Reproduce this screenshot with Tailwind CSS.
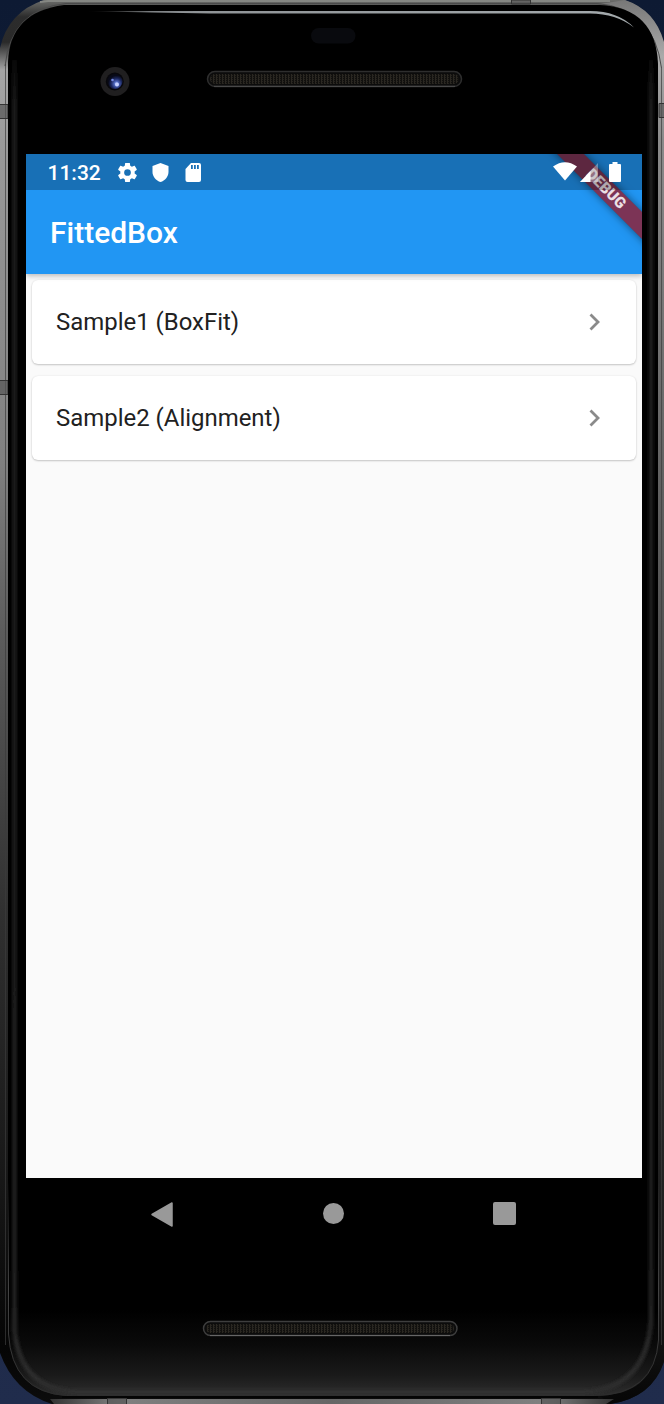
<!DOCTYPE html>
<html lang="en"><head><meta charset="utf-8"><title>FittedBox</title>
<script src="https://cdn.jsdelivr.net/npm/@tailwindcss/browser@4"></script></head>
<body class="bg-[#0d1a33]">
<div class="relative w-[664px] h-[1404px] overflow-hidden font-['Roboto',sans-serif]">
<!-- device shell -->
<svg class="absolute inset-0" width="664" height="1404" viewBox="0 0 664 1404">
<defs>
<linearGradient id="sky" x1="0" y1="0" x2="0" y2="1"><stop offset="0" stop-color="#0d1a33"/><stop offset="1" stop-color="#202c4c"/></linearGradient>
<linearGradient id="metal" x1="0" y1="0" x2="0" y2="1"><stop offset="0" stop-color="#6c6d6b"/><stop offset=".012" stop-color="#2c2c2c"/><stop offset=".03" stop-color="#2a2a2a"/><stop offset=".05" stop-color="#a5a5a5"/><stop offset=".1" stop-color="#9a9a9a"/><stop offset=".33" stop-color="#808080"/><stop offset=".45" stop-color="#5c5c5c"/><stop offset=".65" stop-color="#303030"/><stop offset=".85" stop-color="#161616"/><stop offset=".96" stop-color="#050505"/><stop offset="1" stop-color="#0c0c0c"/></linearGradient>
<linearGradient id="metalR" x1="0" y1="0" x2="0" y2="1"><stop offset="0" stop-color="#777"/><stop offset=".04" stop-color="#aaa"/><stop offset=".1" stop-color="#8a8a8a"/><stop offset=".35" stop-color="#606060"/><stop offset=".7" stop-color="#303030"/><stop offset=".93" stop-color="#181818"/><stop offset="1" stop-color="#060606"/></linearGradient>
<linearGradient id="chin" x1="0" y1="0" x2="0" y2="1"><stop offset="0" stop-color="#000"/><stop offset=".4" stop-color="#0a0a0a"/><stop offset=".75" stop-color="#1a1a1a"/><stop offset="1" stop-color="#2e2e2e"/></linearGradient>
<linearGradient id="edge" x1="0" y1="30" x2="0" y2="1396" gradientUnits="userSpaceOnUse"><stop offset="0" stop-color="#1c1c1c" stop-opacity="0"/><stop offset=".06" stop-color="#1c1c1c"/><stop offset=".9" stop-color="#1e1e1e"/><stop offset="1" stop-color="#303030"/></linearGradient>
<linearGradient id="rail" x1="0" y1="0" x2="1" y2="0"><stop offset="0" stop-color="#333"/><stop offset=".12" stop-color="#808080"/><stop offset=".5" stop-color="#666"/><stop offset=".88" stop-color="#808080"/><stop offset="1" stop-color="#333"/></linearGradient>
<linearGradient id="rim" x1="0" y1="1180" x2="0" y2="1396" gradientUnits="userSpaceOnUse"><stop offset="0" stop-color="#484848" stop-opacity="0"/><stop offset=".5" stop-color="#444"/><stop offset="1" stop-color="#2c2c2c"/></linearGradient>
<linearGradient id="shine" x1="0" y1="0" x2="1" y2="0"><stop offset="0" stop-color="#888" stop-opacity="0"/><stop offset=".12" stop-color="#8d9194"/><stop offset="1" stop-color="#a4aaad"/></linearGradient>
<filter id="soft" filterUnits="userSpaceOnUse" x="0" y="0" width="664" height="1404"><feGaussianBlur stdDeviation="1.800"/></filter>
<pattern id="mesh" width="3" height="2" patternUnits="userSpaceOnUse"><rect width="3" height="2" fill="#11100e"/><rect width="1" height="2" fill="#2b2822"/><rect x="1" y="1" width="1" height="1" fill="#24221d"/></pattern>
<radialGradient id="lens" cx=".6" cy=".65" r=".55"><stop offset="0" stop-color="#a9bdff"/><stop offset=".3" stop-color="#4860b5"/><stop offset=".65" stop-color="#1b265c"/><stop offset="1" stop-color="#080a18"/></radialGradient>
<clipPath id="face"><path d="M64 5H600Q656 8 658 64V1342Q655 1396 594 1396H66Q12 1392 8 1334V62Q10 12 64 5Z"/></clipPath>
</defs>
<rect width="664" height="1404" fill="url(#sky)"/>
<path d="M44 0H624Q655 10 664 42V1360Q652 1398 610 1404H52Q14 1392 0 1353V48Q8 12 44 0Z" fill="url(#metal)"/>
<path d="M625 0Q655 10 664 42V1362Q652 1398 610 1404L600 1396Q653 1392 655 1342V64Q650 12 600 4Z" fill="url(#metalR)"/>
<path d="M50 1399H614L606 1404H54Z" fill="url(#rail)"/>
<path d="M40 2L48 1H610" fill="none" stroke="#858783" stroke-width="2"/>
<path d="M5 66Q11 9 66 3.500H597Q654 8 661.500 68" fill="none" stroke="#4a4a4a" stroke-width="1"/>
<path d="M5.500 64V1345M661.500 68V1345" stroke="#3c3c3c" stroke-opacity=".7"/>
<g fill="#555" fill-opacity=".7" stroke="#333" stroke-width="1"><path d="M-1 104.500H8V118.500H-1ZM-1 380.500H8V394.500H-1ZM659 103.500H665V117.500H659ZM511.500 0H530.500V4H511.500ZM107.500 1398H126.500V1405H107.500ZM541.500 1398H560.500V1405H541.500Z"/></g>
<path d="M64 5H600Q656 8 658 64V1342Q655 1396 594 1396H66Q12 1392 8 1334V62Q10 12 64 5Z"/>
<g clip-path="url(#face)">
<rect x="8" y="1310" width="650" height="87" fill="url(#chin)"/>
<path d="M14.500 60V1330Q20 1390 78 1392H584Q647 1388 651 1320V60" fill="none" stroke="url(#edge)" stroke-width="4.500" filter="url(#soft)"/>
</g>
<path d="M8.500 1180V1334Q12 1392 66 1395.500M594 1395.500Q655 1395 658.500 1340V1180" fill="none" stroke="url(#rim)" stroke-width="1"/>
<path d="M62 1397H598" stroke="#050505" stroke-width="2"/>
<path d="M86 11.200L210 11H590Q618 11 634 27.500Q616 13.500 590 13.500H210Z" fill="url(#shine)"/>
<rect x="311" y="28" width="44.500" height="15.500" rx="7.700" fill="#090a0e"/>
<circle cx="115" cy="81.500" r="14.500" fill="#201f20"/><circle cx="114.800" cy="81.500" r="9" fill="#08080c"/><circle cx="115" cy="81.500" r="7.500" fill="url(#lens)"/><circle cx="112.500" cy="80" r="1.300" fill="#7489e0"/><circle cx="117" cy="84.500" r="2" fill="#c4d0ff"/>
<rect x="207.500" y="71.500" width="254" height="15" rx="7.500" fill="#0c0c0c" stroke="#2e2e2e" stroke-width="1.500"/><rect x="210" y="74" width="249" height="10" rx="5" fill="url(#mesh)"/><path d="M214 86.300H455" stroke="#505050"/>
<rect x="203.500" y="1321.500" width="253.500" height="14" rx="7" fill="#0c0c0c" stroke="#3e3e3e" stroke-width="1.500"/><rect x="206" y="1324" width="248" height="9" rx="4.500" fill="url(#mesh)"/><path d="M210 1335.500H450" stroke="#666"/>
</svg>
<!-- display -->
<div class="relative ml-[26px] mt-[154px] w-[616px]">
<div class="relative h-[1024px] overflow-hidden bg-[#fafafa] flex flex-col">
<header class="relative z-10 shrink-0 bg-[#2196f3] shadow-[0_2px_5px_rgba(0,0,0,.25)]">
<!-- corner ribbon, under the translucent status bar -->
<div class="absolute top-[25px] left-[494px] w-[170px] h-[19px] rotate-45 bg-[#8c2339]/85 shadow-[0_0_9px_rgba(0,0,0,.5)] flex items-center justify-center pl-0.5 text-[15.300px] leading-none font-black text-white/85">DEBUG</div>
<div class="relative z-10 h-9 bg-black/25 flex items-center pl-[21.500px] pr-[21px] text-white">
<span class="w-[70px] text-[21px] leading-9 font-medium pt-0.5 whitespace-nowrap">11:32</span>
<svg class="shrink-0 mt-px -ml-[1.500px]" width="23" height="23" viewBox="0 0 24 24" fill="currentColor"><path d="M19.430 12.980c.04-.32.07-.64.07-.98s-.03-.66-.07-.98l2.110-1.650c.19-.15.24-.42.12-.64l-2-3.460c-.12-.22-.39-.3-.61-.22l-2.490 1c-.52-.4-1.080-.73-1.690-.98l-.38-2.650C14.460 2.180 14.250 2 14 2h-4c-.25 0-.46.18-.49.420l-.38 2.650c-.61.25-1.170.59-1.690.98l-2.490-1c-.23-.09-.49 0-.61.22l-2 3.460c-.13.22-.07.49.12.64l2.110 1.650c-.04.32-.07.65-.07.98s.03.66.07.98l-2.110 1.650c-.19.15-.24.42-.12.64l2 3.460c.12.22.39.3.61.22l2.490-1c.52.4 1.080.73 1.690.98l.38 2.650c.03.24.24.42.49.42h4c.25 0 .46-.18.49-.42l.38-2.650c.61-.25 1.170-.59 1.690-.98l2.490 1c.23.09.49 0 .61-.22l2-3.460c.12-.22.07-.49-.12-.64l-2.110-1.650zM12 15.500a3.500 3.500 0 1 1 0-7 3.500 3.500 0 0 1 0 7z"/></svg>
<svg class="shrink-0 ml-[13px]" width="17" height="19" viewBox="0 0 17 19" fill="currentColor"><path d="M8.500 0L16.500 3V9C16.500 13.500 13 17.700 8.500 19C4 17.700.5 13.500.5 9V3Z"/></svg>
<svg class="shrink-0 ml-4" width="17" height="19" viewBox="0 0 17 19"><path d="M6 0H14Q16 0 16 2V17Q16 19 14 19H2.500Q.5 19 .5 17V6Z" fill="#fff"/><path d="M6 2H7.800V6H6ZM9 2H10.800V6H9ZM12 2H13.800V6H12Z" fill="#1a70b6"/></svg>
<svg class="ml-auto shrink-0 -mt-px" width="24" height="19" viewBox="0 0 24 19" fill="currentColor"><path d="M0 4.500Q12-4 24 4.500L12 18.500Z"/></svg>
<svg class="shrink-0 ml-[3px]" width="18" height="19" viewBox="0 0 18 19" fill="currentColor"><path d="M18 0V19H0Z" opacity=".35"/><path d="M10.500 8V19H0Z"/></svg>
<svg class="shrink-0 ml-[11px] -mt-px" width="12" height="20" viewBox="0 0 12 20" fill="currentColor"><path d="M3.500 0H8.500V2H11Q12 2 12 3V19Q12 20 11 20H1Q0 20 0 19V3Q0 2 1 2H3.500Z"/></svg>
</div>
<div class="h-[84px] pl-6 flex items-center"><h1 class="text-[30px] leading-9 font-medium text-white pt-0.5">FittedBox</h1></div>
</header>
<main class="flex flex-col gap-3 px-1.5 pt-1.5">
<div class="h-[84px] rounded-[6px] bg-white shadow-[0_1px_2px_rgba(0,0,0,.2),0_0_2px_rgba(0,0,0,.08)] flex items-center justify-between pl-6 pr-[35.500px]"><span class="text-[23.950px] leading-8 text-[#212121]">Sample1 (BoxFit)</span><svg width="12" height="18" viewBox="0 0 12 18" fill="none" stroke="#8a8a8a" stroke-width="2.800"><path d="M1.500 1.500L9 9L1.500 16.500"/></svg></div>
<div class="h-[84px] rounded-[6px] bg-white shadow-[0_1px_2px_rgba(0,0,0,.2),0_0_2px_rgba(0,0,0,.08)] flex items-center justify-between pl-6 pr-[35.500px]"><span class="text-[23.950px] leading-8 text-[#212121]">Sample2 (Alignment)</span><svg width="12" height="18" viewBox="0 0 12 18" fill="none" stroke="#8a8a8a" stroke-width="2.800"><path d="M1.500 1.500L9 9L1.500 16.500"/></svg></div>
</main>
</div>
<nav class="h-[71px] pl-[125px] pr-[126.500px] flex items-center justify-between">
<svg width="22" height="26" viewBox="0 0 22 26"><path d="M1 13.500L21 2V25Z" fill="#999" stroke="#999" stroke-width="1.500" stroke-linejoin="round"/></svg>
<span class="size-[21px] rounded-full bg-[#999] ml-px"></span>
<span class="size-[23px] rounded-[2px] bg-[#999]"></span>
</nav>
</div>
</div>
</body></html>
